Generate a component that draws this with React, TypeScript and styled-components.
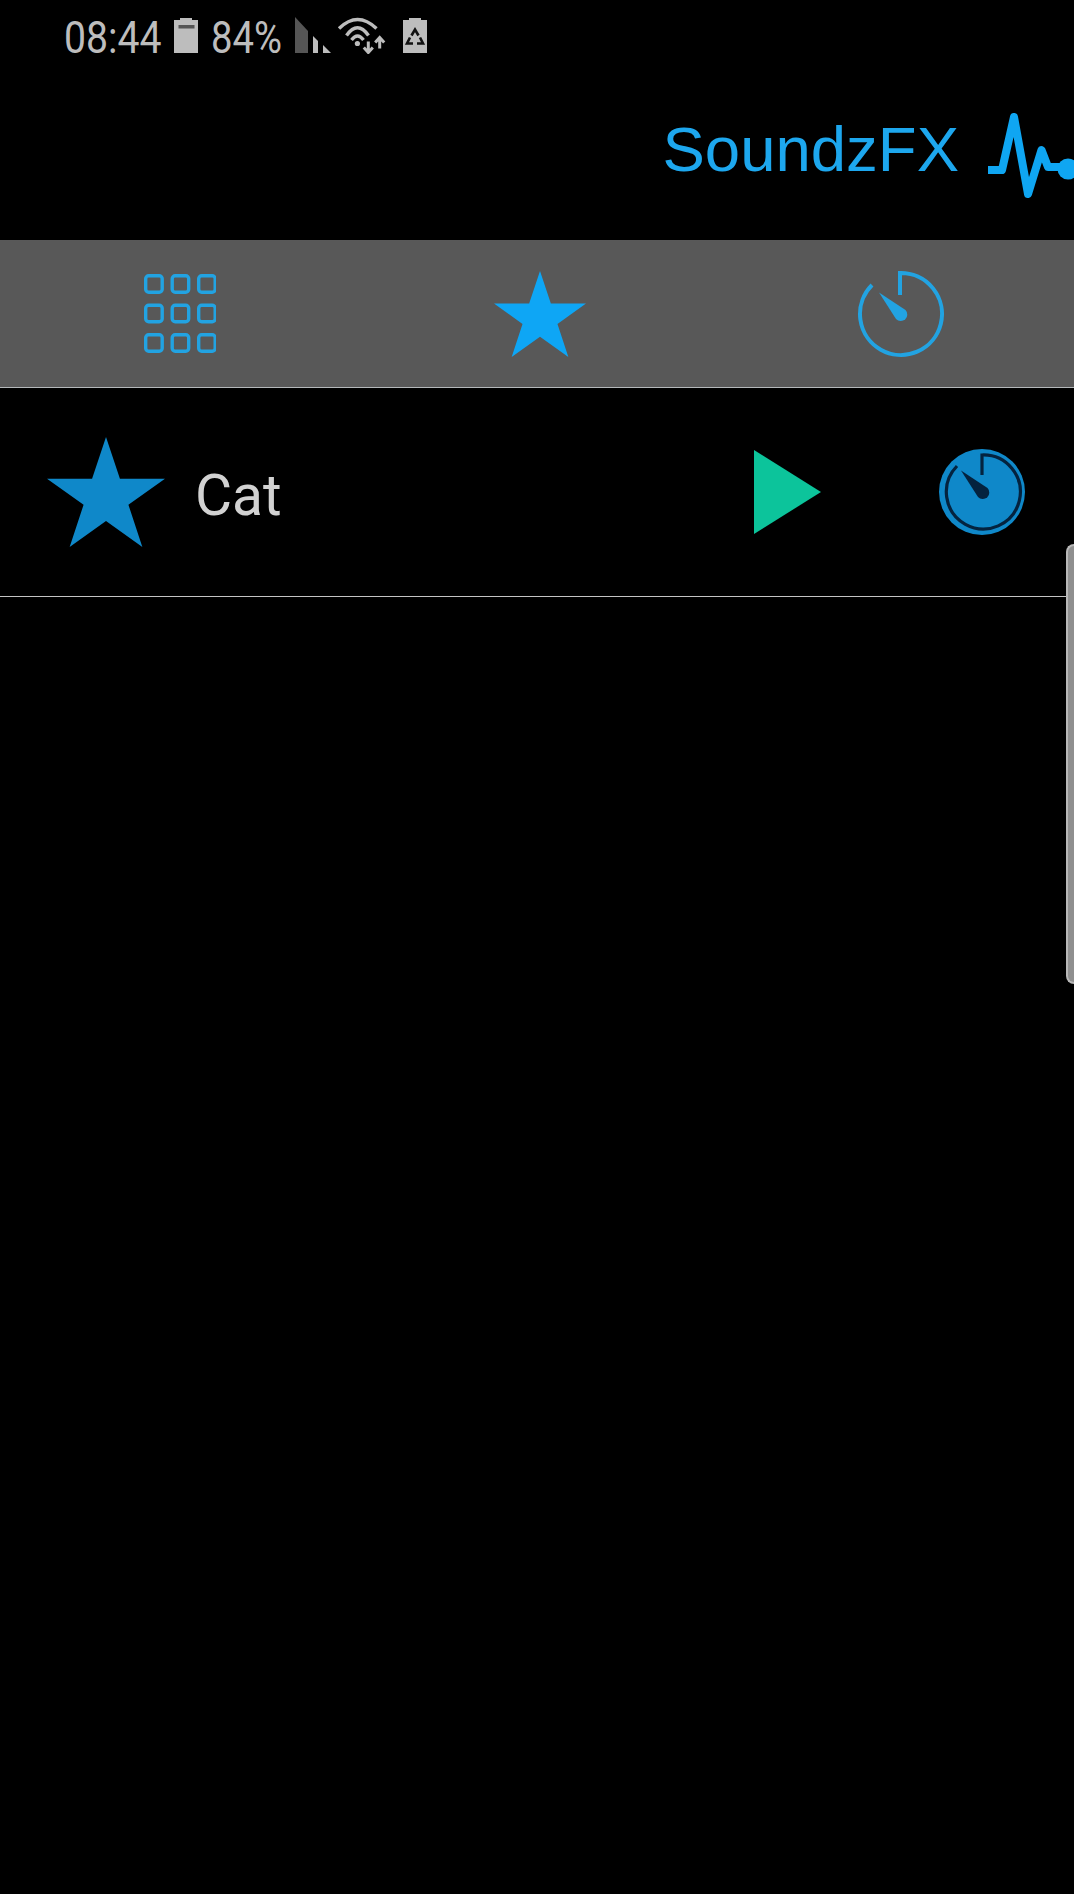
import React from 'react';
import styled, { createGlobalStyle } from 'styled-components';

const GlobalStyle = createGlobalStyle`
    html,
    body {
        margin: 0;
        background: #000;
    }
`;

const Screen = styled.div`
    position: relative;
    width: 1074px;
    height: 1894px;
    overflow: hidden;
    background: #000;
    display: flex;
    flex-direction: column;
`;

const StatusBar = styled.div`
    height: 62px;
    padding-left: 64px;
    display: flex;
    align-items: flex-start;
    color: #bdbdbd;
    font-family: Roboto, sans-serif;
    font-size: 45px;
    line-height: 1;
`;

const StatusText = styled.span<{ $width: number; $left: number; $scale: number }>`
    display: block;
    width: ${(p) => p.$width}px;
    margin-left: ${(p) => p.$left}px;
    margin-top: 15px;
    transform: scaleX(${(p) => p.$scale});
    transform-origin: left center;
    white-space: nowrap;
`;

const StatusIcon = styled.svg<{ $left: number; $top: number }>`
    flex: none;
    margin-left: ${(p) => p.$left}px;
    margin-top: ${(p) => p.$top}px;
`;

const AppHeader = styled.header`
    height: 178px;
    display: flex;
    justify-content: flex-end;
    align-items: flex-start;
`;

const AppTitle = styled.h1`
    margin: 51px 29px 0 0;
    color: #1da7ee;
    font-family: 'Liberation Sans', Arial, sans-serif;
    font-size: 63.5px;
    font-weight: 400;
    line-height: 72px;
`;

const PulseLogo = styled.svg`
    flex: none;
    margin-top: 38px;
`;

const TabBar = styled.nav`
    height: 147px;
    box-sizing: content-box;
    display: grid;
    grid-template-columns: repeat(3, 360px);
    align-items: center;
    justify-items: center;
    background: #585858;
    border-bottom: 1px solid #b4b8ba;
    overflow: hidden;
`;

const SoundRow = styled.div`
    height: 208px;
    padding: 0 48px 0 47px;
    display: flex;
    align-items: center;
    border-bottom: 1px solid #c4c4c4;
`;

const SoundName = styled.span`
    margin: 7px 0 0 30px;
    color: #d2d2d2;
    font-family: Roboto, sans-serif;
    font-size: 57px;
    line-height: 1;
`;

const PlayIcon = styled.svg`
    flex: none;
    margin-left: auto;
    margin-right: 117px;
`;

const EdgeHandle = styled.div`
    position: absolute;
    top: 544px;
    right: 0;
    width: 8px;
    height: 440px;
    box-sizing: border-box;
    background: #8f8f8f;
    border: solid #b8b8b8;
    border-width: 2px 0 2px 2px;
    border-radius: 12px 0 0 12px;
`;

const GRID_X = [0, 26.5, 53];
const GRID_Y = [0, 29.5, 59];
const STAR = '50,0 61.8,36 100,36 69,58.5 80.8,95 50,72.5 19.2,95 31,58.5 0,36 38.2,36';

const BatteryIcon = () => (
    <StatusIcon $left={13} $top={18} width="24" height="35" viewBox="0 0 24 35">
        <path d="M6 0h12v2h6v33H0V2h6z" fill="#bdbdbd" />
        <rect x="4.5" y="7" width="16" height="3.5" fill="#555" />
    </StatusIcon>
);

const SignalIcon = () => (
    <StatusIcon $left={15} $top={17} width="36" height="36" viewBox="0 0 36 36">
        <path d="M0 0l13 14v22H0z" fill="#555" />
        <path d="M18 19l5 5v12h-5z" fill="#bdbdbd" />
        <path d="M28 28l8 8h-8z" fill="#bdbdbd" />
    </StatusIcon>
);

const WifiIcon = () => (
    <StatusIcon $left={6} $top={17} width="50" height="37" viewBox="0 0 50 37">
        <g fill="none" stroke="#bdbdbd" strokeWidth="3.4">
            <path d="M2 11.5Q20.5 -6.5 39.5 11.5" />
            <path d="M9.5 18.5Q20.5 3 31.5 18.5" />
            <path d="M14.5 23Q20.5 15 26.5 23" />
        </g>
        <circle cx="20.4" cy="26.5" r="2.6" fill="#bdbdbd" />
        <path d="M31.3 24.5v11M26.8 30.5l4.5 5 4.5-5" fill="none" stroke="#bdbdbd" strokeWidth="3" />
        <path d="M42.7 31.5v-11M38.2 25.5l4.5-5 4.5 5" fill="none" stroke="#bdbdbd" strokeWidth="3" />
    </StatusIcon>
);

const RecycleBatteryIcon = () => (
    <StatusIcon $left={16} $top={18} width="24" height="35" viewBox="0 0 24 35">
        <path d="M6 0h12v2h6v33H0V2h6z" fill="#bdbdbd" />
        <g fill="none" stroke="#111" strokeWidth="2.6">
            <path d="M8.5 17.5l3.5-6 3.5 6" />
            <path d="M17 19.5l3 6h-6" />
            <path d="M10 25.5H4l3-6" />
        </g>
    </StatusIcon>
);

const GridIcon = () => (
    <svg width="72" height="79" viewBox="0 0 72 79" fill="none" stroke="#22a3e2" strokeWidth="3.4">
        {GRID_Y.map((y) =>
            GRID_X.map((x) => (
                <rect key={`${x}-${y}`} x={x + 1.7} y={y + 1.7} width="16.5" height="16.5" rx="3" />
            )),
        )}
    </svg>
);

const TimerIcon: React.FC<{ color: string; fill?: string }> = ({ color, fill }) => (
    <svg width="88" height="88" viewBox="0 0 88 88">
        {fill && <circle cx="44" cy="44" r="43" fill={fill} />}
        <path
            d={fill ? 'M19 18A37 37 0 1 0 44 7v20' : 'M16 15A41 41 0 1 0 44 3v22'}
            fill="none"
            stroke={color}
            strokeWidth={fill ? 3.2 : 4}
        />
        <path d="M23 22.5L49.5 40A6 6 0 1 1 40 49z" fill={color} />
    </svg>
);

const App = () => {
    return (
        <Screen>
            <GlobalStyle />
            <StatusBar>
                <StatusText $width={97} $left={0} $scale={0.87}>
                    08:44
                </StatusText>
                <BatteryIcon />
                <StatusText $width={69} $left={13} $scale={0.85}>
                    84%
                </StatusText>
                <SignalIcon />
                <WifiIcon />
                <RecycleBatteryIcon />
            </StatusBar>
            <AppHeader>
                <AppTitle>SoundzFX</AppTitle>
                <PulseLogo width="86" height="100" viewBox="988 100 86 100">
                    <path
                        d="M988 170h14l12-53 14 77 13.5-44 6.5 17h15"
                        fill="none"
                        stroke="#0fa6f2"
                        strokeWidth="8"
                        strokeLinejoin="round"
                    />
                    <circle cx="1068" cy="169" r="10.5" fill="#0fa6f2" />
                </PulseLogo>
            </AppHeader>
            <TabBar>
                <GridIcon />
                <svg width="92" height="86" viewBox="0 0 100 95" preserveAspectRatio="none">
                    <polygon points={STAR} fill="#0ea6f5" />
                </svg>
                <TimerIcon color="#22a3e2" />
            </TabBar>
            <SoundRow>
                <svg width="118" height="110" viewBox="0 0 100 95" preserveAspectRatio="none">
                    <polygon points={STAR} fill="#0f88c9" />
                </svg>
                <SoundName>Cat</SoundName>
                <PlayIcon width="67" height="84" viewBox="0 0 67 84">
                    <polygon points="0,0 67,42 0,84" fill="#0cc49b" />
                </PlayIcon>
                <TimerIcon color="#04233f" fill="#0f88c9" />
            </SoundRow>
            <EdgeHandle />
        </Screen>
    );
};

export default App;
